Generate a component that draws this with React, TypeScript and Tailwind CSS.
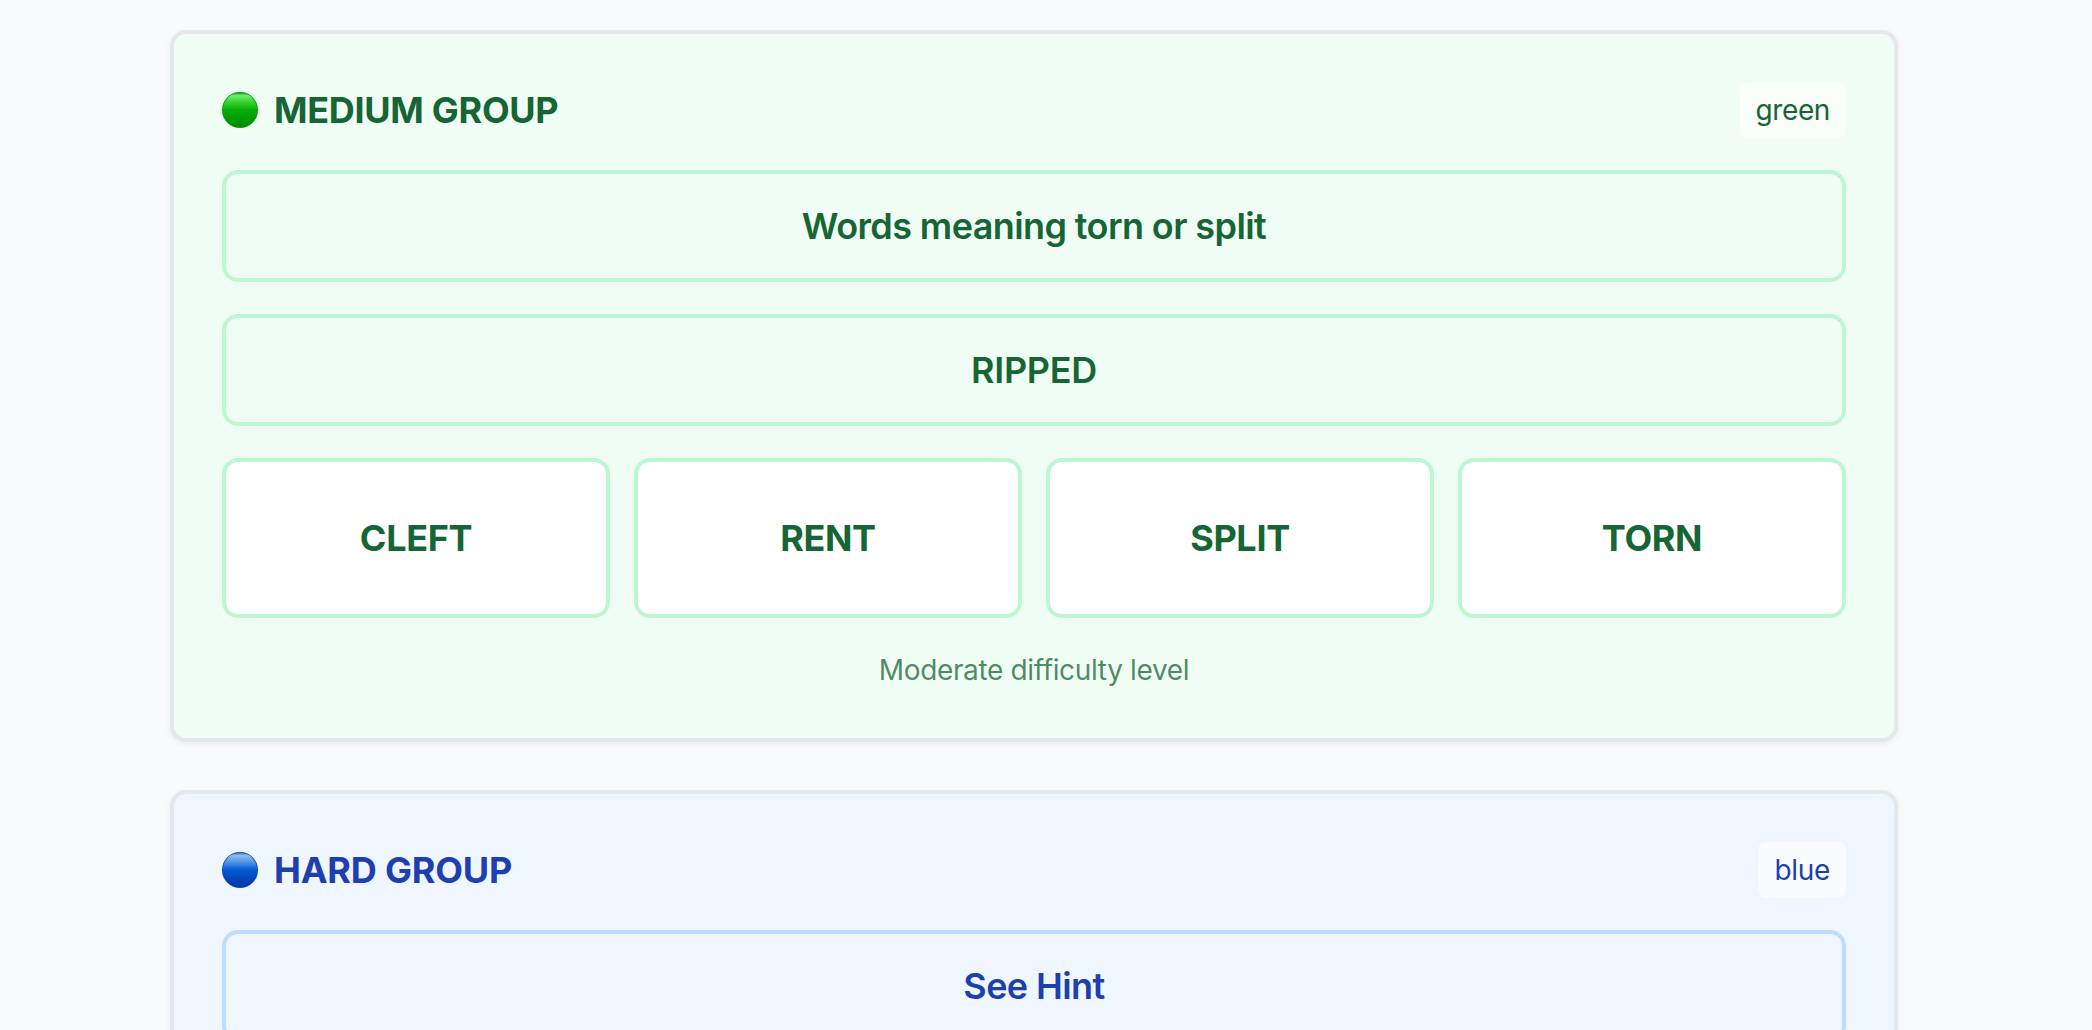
const words = ["CLEFT", "RENT", "SPLIT", "TORN"];

function Dot({ color }: { color: string }) {
  const isGreen = color === "green";
  return (
    <svg width="36" height="36" viewBox="0 0 36 36" className="shrink-0">
      <defs>
        <linearGradient id={color + "Fill"} x1="0" y1="0" x2="0" y2="1">
          <stop offset="0%" stopColor={isGreen ? "#0c9c0c" : "#2a78d0"} />
          <stop offset="8%" stopColor={isGreen ? "#6cf06a" : "#8fbdf0"} />
          <stop offset="28%" stopColor={isGreen ? "#34d030" : "#4d90e4"} />
          <stop offset="50%" stopColor={isGreen ? "#04ae04" : "#0058d2"} />
          <stop offset="100%" stopColor={isGreen ? "#018a01" : "#0034a4"} />
        </linearGradient>
      </defs>
      <circle cx="18" cy="18" r="18" fill={isGreen ? "#0a9a0a" : "#0a4fb4"} />
      <circle cx="18" cy="18" r="17.2" fill={"url(#" + color + "Fill)"} />
    </svg>
  );
}

export default function App() {
  return (
    <div className="h-[1030px] overflow-hidden bg-[#f9fafb] font-['Inter',sans-serif] antialiased">
      <div className="ml-[170px] flex w-[1728px] flex-col gap-[48px] pt-[30px]">
        <div className="rounded-[16px] border-[4px] border-[#e5e7eb] bg-[#f0fdf4] p-[48px] shadow-[0_2px_6px_rgba(0,0,0,0.06)]">
          <div className="mb-[32px] flex h-[56px] items-center justify-between">
            <div className="flex items-center gap-[16px]">
              <Dot color="green" />
              <h2 className="text-[36px] font-bold tracking-[-0.3px] text-[#166534]">MEDIUM GROUP</h2>
            </div>
            <span className="rounded-[8px] bg-white/60 px-[16px] py-[8px] text-[28px] leading-[40px] tracking-[-0.4px] text-[#166534]">green</span>
          </div>
          <div className="mb-[32px] flex h-[112px] items-center justify-center rounded-[16px] border-[4px] border-[#bbf7d0] text-[36px] font-semibold tracking-[-0.6px] text-[#166534]">Words meaning torn or split</div>
          <div className="mb-[32px] flex h-[112px] items-center justify-center rounded-[16px] border-[4px] border-[#bbf7d0] text-[36px] font-semibold tracking-[-0.3px] text-[#166534]">RIPPED</div>
          <div className="grid grid-cols-4 gap-[24px]">
            {words.map((w) => (
              <div key={w} className="flex h-[160px] items-center justify-center rounded-[16px] border-[4px] border-[#bbf7d0] bg-white text-[36px] font-bold tracking-[-0.35px] text-[#166534]">{w}</div>
            ))}
          </div>
          <p className="mt-[32px] text-center text-[28px] leading-[40px] tracking-[-0.35px] text-[#166534]/75">Moderate difficulty level</p>
        </div>
        <div className="rounded-[16px] border-[4px] border-[#e5e7eb] bg-[#eff6ff] p-[48px] shadow-[0_2px_6px_rgba(0,0,0,0.06)]">
          <div className="mb-[32px] flex h-[56px] items-center justify-between">
            <div className="flex items-center gap-[16px]">
              <Dot color="blue" />
              <h2 className="text-[36px] font-bold tracking-[-0.2px] text-[#1e40af]">HARD GROUP</h2>
            </div>
            <span className="rounded-[8px] bg-white/60 px-[16px] py-[8px] text-[28px] leading-[40px] tracking-[-0.3px] text-[#1e40af]">blue</span>
          </div>
          <div className="flex h-[112px] items-center justify-center rounded-[16px] border-[4px] border-[#bfdbfe] text-[36px] font-semibold tracking-[-0.6px] text-[#1e40af]">See Hint</div>
        </div>
      </div>
    </div>
  );
}
